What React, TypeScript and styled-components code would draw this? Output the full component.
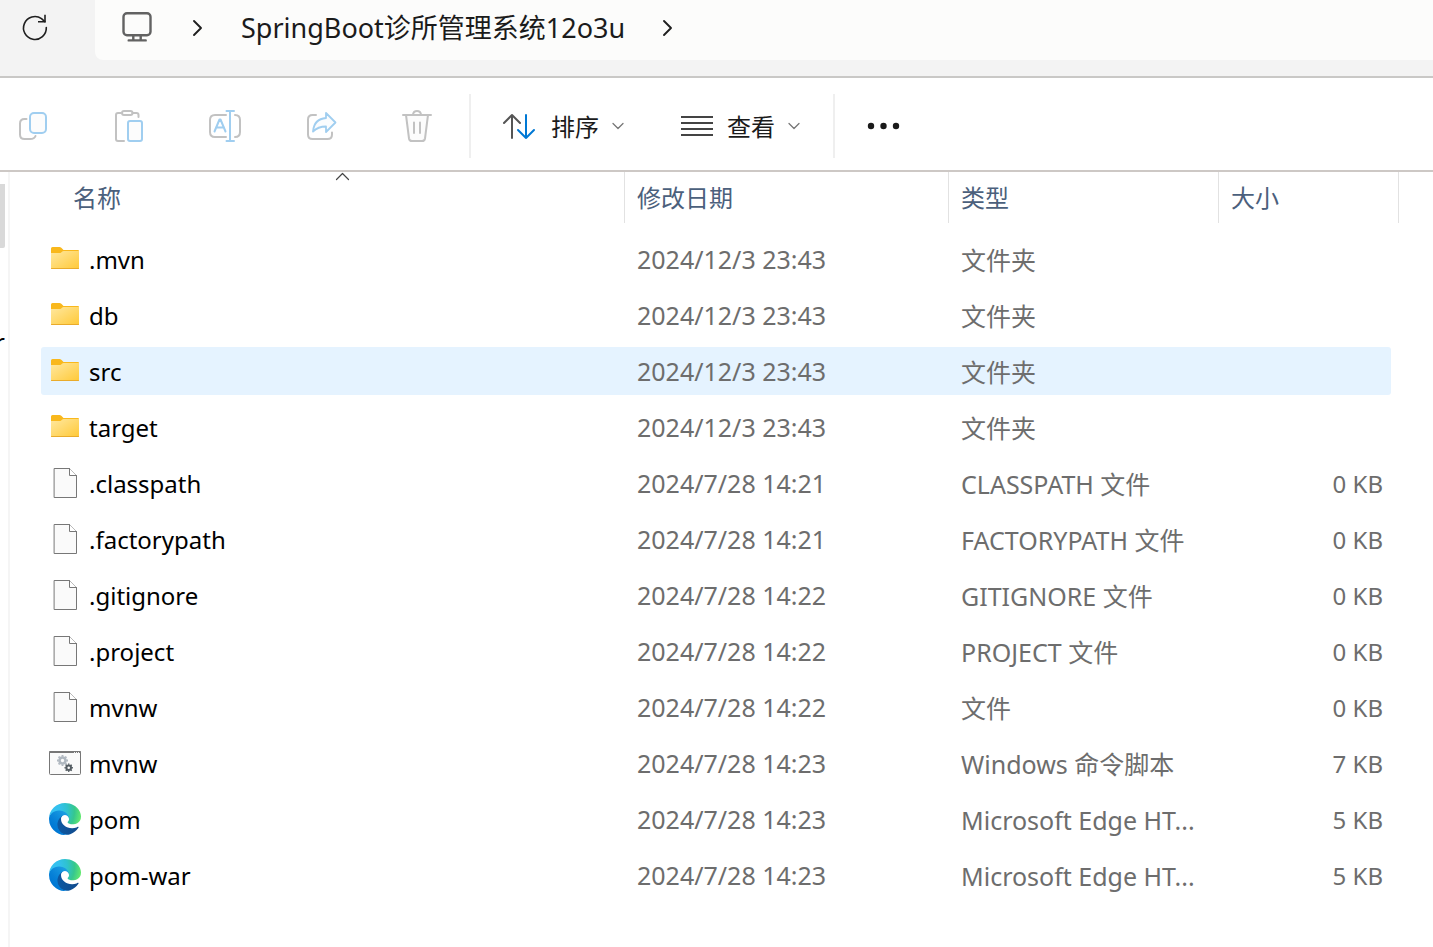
import React from 'react';
import styled, { createGlobalStyle } from 'styled-components';

const GlobalStyle = createGlobalStyle`
  * { box-sizing: border-box; }
  body { margin: 0; background: #fff; }
  body, button { font-family: 'Noto Sans', 'Noto Sans CJK SC', sans-serif; }
  button { border: 0; padding: 0; background: none; }
  svg { display: block; fill: none; stroke-linecap: round; stroke-linejoin: round; }
`;

const Window = styled.div`
  display: flex;
  flex-direction: column;
  min-height: 100vh;
  overflow: hidden;
`;

const AddressBar = styled.header`
  display: flex;
  height: 78px;
  padding-bottom: 16px;
  background: #f3f3f3;
  border-bottom: 2px solid #c9c8c6;
`;

const RefreshButton = styled.button`
  width: 95px;
  padding-left: 20px;
  padding-bottom: 4px;
`;

const Breadcrumb = styled.nav`
  flex: 1;
  display: flex;
  align-items: center;
  gap: 37px;
  padding: 0 0 4px 24px;
  background: #fcfcfb;
  background-clip: padding-box;
  border-bottom-left-radius: 8px;
`;

const Crumb = styled.a`
  color: #1b1b1b;
  font-size: 27px;
  line-height: 40px;
  text-decoration: none;
  white-space: nowrap;
`;

const Toolbar = styled.div`
  display: flex;
  align-items: center;
  height: 94px;
  padding: 4px 0 0 16px;
  border-bottom: 2px solid #cdc8c5;
`;

const IconGroup = styled.div`
  display: flex;
  gap: 60px;
`;

const MenuGroup = styled.div`
  display: flex;
  gap: 54px;
`;

const IconButton = styled.button`
  width: 36px;
  height: 36px;
`;

const Divider = styled.span`
  width: 2px;
  height: 64px;
  margin: 0 31px 0 33px;
  background: #efefef;
`;

const MenuButton = styled.button`
  display: flex;
  align-items: center;
  gap: 13px;
  color: #1b1b1b;
  font-size: 24px;
  line-height: 36px;
  white-space: nowrap;
`;

const Label = styled.span`
  padding-top: 2px;
`;

const Body = styled.div`
  flex: 1;
  display: flex;
`;

const NavPane = styled.aside`
  width: 10px;
  flex: none;
  padding-top: 12px;
  border-right: 2px solid #f5f5f5;
`;

const ScrollThumb = styled.div`
  width: 5px;
  height: 64px;
  background: #d9d9d9;
  border-bottom-right-radius: 2px;
`;

const NavLabel = styled.div`
  display: flex;
  justify-content: flex-end;
  width: 5px;
  height: 36px;
  margin-top: 76px;
  font-size: 24px;
  line-height: 36px;
`;

const Main = styled.main`
  flex: 1;
  min-width: 0;
  padding: 0 34px 0 31px;
`;

const FileTable = styled.table`
  width: 100%;
  table-layout: fixed;
  border-collapse: collapse;
  font-size: 24px;
  line-height: 36px;
  white-space: nowrap;
`;

const Th = styled.th<{ $width?: number }>`
  ${p => p.$width !== undefined && `width: ${p.$width}px;`}
  padding: 0 0 8px;
  font-weight: 400;
  text-align: left;
`;

const HeaderButton = styled.button<{ $first?: boolean; $open?: boolean }>`
  position: relative;
  display: block;
  width: 100%;
  height: 51px;
  padding-top: 1px;
  padding-left: ${p => (p.$first ? 32 : 12)}px;
  border-right: ${p => (p.$open ? 0 : 1)}px solid #e2e2e2;
  color: #4b607c;
  font-size: 24px;
  line-height: 36px;
  text-align: left;
`;

const HeaderEnd = styled.div`
  height: 51px;
  border-right: 1px solid #e2e2e2;
`;

const SortMark = styled.svg`
  position: absolute;
  top: 0;
  left: 50%;
`;

const Row = styled.tr<{ $active?: boolean }>`
  --row: ${p => (p.$active ? '#e5f3ff' : 'transparent')};
`;

const Td = styled.td`
  padding: 4px 0;
  color: #6d6d6d;
`;

const Cell = styled.div<{ $kind?: 'name' | 'size' }>`
  display: flex;
  align-items: center;
  height: 48px;
  gap: 8px;
  padding: ${p => (p.$kind === 'name' ? '0 8px' : p.$kind === 'size' ? '0 8px 0 12px' : '0 12px')};
  justify-content: ${p => (p.$kind === 'size' ? 'flex-end' : 'flex-start')};
  border-radius: ${p => (p.$kind === 'name' ? '3px 0 0 3px' : p.$kind === 'size' ? '0 3px 3px 0' : '0')};
  background: var(--row);
  color: ${p => (p.$kind === 'name' ? '#000' : 'inherit')};
  font-size: ${p => (p.$kind ? 24 : 25)}px;
`;

const Chevron = () => (
  <svg width="12" height="20" viewBox="0 0 12 20" stroke="#1f1f1f" strokeWidth="1.900">
    <path d="M2 3l7 7-7 7" />
  </svg>
);

const Caret = () => (
  <svg width="12" height="8" viewBox="0 0 12 8" stroke="#777" strokeWidth="1.300">
    <path d="M1 1.500l5 5 5-5" />
  </svg>
);

const FolderIcon = () => (
  <svg width="32" height="32" viewBox="0 0 32 32">
    <defs>
      <linearGradient id="folder" x1="0" y1="0" x2="1" y2="1">
        <stop offset="0" stopColor="#ffe8a0" />
        <stop offset="1" stopColor="#ffc937" />
      </linearGradient>
    </defs>
    <path d="M2 5.500q0-1.500 1.500-1.500h7q1 0 1.800.8l2.200 2.200h14.500q1 0 1 1v4H2z" fill="#f9b81c" />
    <path d="M2 10h8.500q1 0 1.700-.6l1-.9q.6-.5 1.500-.5H30v17q0 1-1 1H3q-1 0-1-1z" fill="url(#folder)" />
    <path d="M2.500 25.500h27" stroke="#e9ab2b" />
  </svg>
);

const FileIcon = () => (
  <svg width="32" height="32" viewBox="0 0 32 32">
    <path d="M5.500 1.500h15l7 7v22h-22z" fill="#fafafa" stroke="#777" />
    <path d="M20.500 1.500v7h7" fill="#fff" stroke="#777" />
  </svg>
);

const Gear = ({ x, y, r, color }: { x: number; y: number; r: number; color: string }) => (
  <g transform={`translate(${x} ${y})`} stroke={color}>
    <circle r={r * 0.55} strokeWidth={r * 0.48} />
    {[0, 45, 90, 135, 180, 225, 270, 315].map(a => (
      <path key={a} d={`M0 ${-r * 0.7}V${-r}`} strokeWidth={r * 0.34} strokeLinecap="butt" transform={`rotate(${a})`} />
    ))}
  </g>
);

const ScriptIcon = () => (
  <svg width="32" height="32" viewBox="0 0 32 32">
    <rect x=".5" y="4.500" width="31" height="23" rx="1" fill="#fafafa" stroke="#777" />
    <path d="M1 5h30" stroke="#777" strokeWidth="2" />
    <path d="M25.500 5.500h.1M27.500 5.500h.1M29.500 5.500h.1" stroke="#fff" />
    <Gear x={13.500} y={13.500} r={5.500} color="#b0b8c0" />
    <Gear x={19.700} y={20.700} r={4.200} color="#545c62" />
  </svg>
);

const EdgeIcon = () => (
  <svg width="32" height="32" viewBox="0 0 256 256">
    <defs>
      <linearGradient id="edgeDeep" x1="63" y1="178" x2="241" y2="178" gradientUnits="userSpaceOnUse">
        <stop offset="0" stopColor="#0c59a4" />
        <stop offset="1" stopColor="#114a8b" />
      </linearGradient>
      <linearGradient id="edgeBlue" x1="150" y1="98" x2="45" y2="212" gradientUnits="userSpaceOnUse">
        <stop offset="0" stopColor="#1b9de2" />
        <stop offset=".16" stopColor="#1595df" />
        <stop offset=".67" stopColor="#0680d7" />
        <stop offset="1" stopColor="#0078d4" />
      </linearGradient>
      <radialGradient id="edgeGreen" cx="26" cy="47" r="202" gradientTransform="scale(1.150 1.300)" gradientUnits="userSpaceOnUse">
        <stop offset="0" stopColor="#35c1f1" />
        <stop offset=".25" stopColor="#34c1ed" />
        <stop offset=".5" stopColor="#2fc2cf" />
        <stop offset=".75" stopColor="#36c78e" />
        <stop offset="1" stopColor="#66eb6e" />
      </radialGradient>
    </defs>
    <path fill="url(#edgeDeep)" d="M231 190.500c-3.400 1.800-6.900 3.400-10.500 4.700a101.500 101.500 0 0 1-35.900 6.500c-47.300 0-88.500-32.500-88.500-74.300.1-11.400 6.400-21.900 16.400-27.300-42.800 1.800-53.800 46.400-53.800 72.500 0 74 68.100 81.400 82.800 81.400 7.900 0 19.800-2.300 27-4.600l1.300-.4a128.300 128.300 0 0 0 66.600-52.800 4 4 0 0 0-5.400-5.700z" />
    <path fill="url(#edgeBlue)" d="M105.700 241.400a79.200 79.200 0 0 1-22.700-21.300 80.700 80.700 0 0 1 29.500-120c3.200-1.500 8.500-4.100 15.600-4a32.400 32.400 0 0 1 25.700 13 31.900 31.900 0 0 1 6.300 18.700c0-.2 24.500-79.600-80-79.600-43.900 0-80 41.700-80 78.200a130.200 130.200 0 0 0 12.100 56 128 128 0 0 0 156.400 67 75.500 75.500 0 0 1-62.800-8z" />
    <path fill="url(#edgeGreen)" d="M152.300 148.900c-.8 1-3.300 2.500-3.300 5.700 0 2.600 1.700 5.100 4.700 7.200 14.400 10 41.500 8.700 41.600 8.700a59.600 59.600 0 0 0 30.300-8.300 61.400 61.400 0 0 0 30.400-52.900c.3-22.400-8-37.300-11.300-43.900C223.500 23.900 177.700 0 128 0a128 128 0 0 0-128 126.200c.5-36.500 36.800-66 80-66 3.500 0 23.500.3 42 10.100 16.300 8.500 24.900 18.900 30.900 29.200 6.100 10.700 7.200 24.100 7.200 29.500s-2.700 13.300-7.800 19.900z" />
  </svg>
);

const icons = { folder: FolderIcon, file: FileIcon, script: ScriptIcon, edge: EdgeIcon };

type Entry = { icon: keyof typeof icons; name: string; date: string; type: string; size?: string; active?: boolean };

const entries: Entry[] = [
  { icon: 'folder', name: '.mvn', date: '2024/12/3 23:43', type: '文件夹' },
  { icon: 'folder', name: 'db', date: '2024/12/3 23:43', type: '文件夹' },
  { icon: 'folder', name: 'src', date: '2024/12/3 23:43', type: '文件夹', active: true },
  { icon: 'folder', name: 'target', date: '2024/12/3 23:43', type: '文件夹' },
  { icon: 'file', name: '.classpath', date: '2024/7/28 14:21', type: 'CLASSPATH 文件', size: '0 KB' },
  { icon: 'file', name: '.factorypath', date: '2024/7/28 14:21', type: 'FACTORYPATH 文件', size: '0 KB' },
  { icon: 'file', name: '.gitignore', date: '2024/7/28 14:22', type: 'GITIGNORE 文件', size: '0 KB' },
  { icon: 'file', name: '.project', date: '2024/7/28 14:22', type: 'PROJECT 文件', size: '0 KB' },
  { icon: 'file', name: 'mvnw', date: '2024/7/28 14:22', type: '文件', size: '0 KB' },
  { icon: 'script', name: 'mvnw', date: '2024/7/28 14:23', type: 'Windows 命令脚本', size: '7 KB' },
  { icon: 'edge', name: 'pom', date: '2024/7/28 14:23', type: 'Microsoft Edge HT...', size: '5 KB' },
  { icon: 'edge', name: 'pom-war', date: '2024/7/28 14:23', type: 'Microsoft Edge HT...', size: '5 KB' },
];

const GREY = '#c2c2c2';
const BLUE = '#a0cef0';

export default function App() {
  return (
    <Window>
      <GlobalStyle />
      <AddressBar>
        <RefreshButton aria-label="刷新">
          <svg width="30" height="30" viewBox="0 0 30 30" stroke="#1f1f1f" strokeWidth="1.600">
            <path d="M26.300 14.500A11.400 11.400 0 1 1 21.500 5.700L24.800 8.600" />
            <path d="M25 2.500v6.200h-6.200" strokeLinecap="square" strokeLinejoin="miter" />
          </svg>
        </RefreshButton>
        <Breadcrumb aria-label="路径">
          <svg width="36" height="36" viewBox="0 0 36 36" stroke="#626262" strokeWidth="2.400">
            <rect x="4.500" y="3.200" width="27" height="22" rx="3.500" />
            <path d="M14.300 26v4M21.700 26v4M9.700 30.400h17" />
          </svg>
          <Chevron />
          <Crumb href="#">SpringBoot诊所管理系统12o3u</Crumb>
          <Chevron />
        </Breadcrumb>
      </AddressBar>

      <Toolbar role="toolbar">
        <IconGroup>
          <IconButton aria-label="复制">
            <svg width="36" height="36" viewBox="0 0 36 36" strokeWidth="2">
              <path d="M10.500 11H8.500Q4 11 4 15.500V26.500Q4 31 8.500 31H14Q18.500 31 19.500 28" stroke={GREY} />
              <rect x="14" y="5" width="16" height="20" rx="4" fill="#fcfcfc" stroke={BLUE} />
            </svg>
          </IconButton>
          <IconButton aria-label="粘贴">
            <svg width="36" height="36" viewBox="0 0 36 36" strokeWidth="2">
              <path d="M9 5H6Q4 5 4 7V31Q4 33 6 33H12M20.500 5H24.500Q26.500 5 26.500 7V9" stroke={GREY} />
              <rect x="10" y="3" width="10.500" height="4" rx="2" stroke={GREY} />
              <rect x="16" y="13" width="14" height="20" rx="2" fill="#fcfcfc" stroke={BLUE} />
            </svg>
          </IconButton>
          <IconButton aria-label="重命名">
            <svg width="36" height="36" viewBox="0 0 36 36" strokeWidth="2">
              <path d="M18 7H7Q2 7 2 12V24Q2 29 7 29H18M27 7Q32 7 32 12V24Q32 29 27 29" stroke={GREY} />
              <path d="M22 3V33M18.500 3H26M18.500 33H26" stroke={BLUE} />
              <path d="M6.500 23.500L11.500 11.500H12.500L17.500 23.500M8 19.500H16" stroke={BLUE} />
            </svg>
          </IconButton>
          <IconButton aria-label="共享">
            <svg width="36" height="36" viewBox="0 0 36 36" strokeWidth="2">
              <path d="M12 7H8.500Q4 7 4 11.500V26.500Q4 31 8.500 31H23.500Q28 31 28 26.500V24.500" stroke={GREY} />
              <path d="M22 5L31.500 14.500L22 24V18.500Q14 18.500 9 23.500Q10 11 22 10Z" fill="#fafcfe" stroke={BLUE} strokeWidth="1.800" />
            </svg>
          </IconButton>
          <IconButton aria-label="删除">
            <svg width="36" height="36" viewBox="0 0 36 36" strokeWidth="2">
              <path d="M6 7L9 30.500Q9.400 33 12 33H22Q24.600 33 25 30.500L28 7" fill="#fcfcfc" stroke={GREY} />
              <path d="M3 7H31M13 6.500Q13.500 3 17 3T21 6.500M14 14.500V25M20 14.500V25" stroke={GREY} />
            </svg>
          </IconButton>
        </IconGroup>
        <Divider />
        <MenuGroup>
          <MenuButton>
            <svg width="36" height="36" viewBox="0 0 36 36" strokeWidth="2">
              <path d="M10 30V7M2 15L10 7L18 15" stroke="#555" />
              <path d="M24 7V30M16 22L24 30L32 22" stroke="#0078d4" />
            </svg>
            <Label>排序</Label>
            <Caret />
          </MenuButton>
          <MenuButton>
            <svg width="36" height="36" viewBox="0 0 36 36" stroke="#444" strokeWidth="2" shapeRendering="crispEdges">
              <path d="M4 9H34M4 15H34M4 21H34M4 27H34" />
            </svg>
            <Label>查看</Label>
            <Caret />
          </MenuButton>
        </MenuGroup>
        <Divider />
        <IconButton aria-label="更多">
          <svg width="36" height="36" viewBox="0 0 36 36">
            <g fill="#1a1a1a">
              <circle cx="5" cy="18" r="3.200" />
              <circle cx="17.500" cy="18" r="3.200" />
              <circle cx="30" cy="18" r="3.200" />
            </g>
          </svg>
        </IconButton>
      </Toolbar>

      <Body>
        <NavPane>
          <ScrollThumb />
          <NavLabel>r</NavLabel>
        </NavPane>
        <Main>
          <FileTable>
            <thead>
              <tr>
                <Th>
                  <HeaderButton $first>
                    名称
                    <SortMark width="18" height="10" viewBox="0 0 18 10" stroke="#444" strokeWidth="1.200">
                      <path d="M3.500 7.500l6-6 6 6" />
                    </SortMark>
                  </HeaderButton>
                </Th>
                <Th $width={324}><HeaderButton>修改日期</HeaderButton></Th>
                <Th $width={270}><HeaderButton>类型</HeaderButton></Th>
                <Th $width={172}><HeaderButton $open>大小</HeaderButton></Th>
                <Th $width={8} aria-hidden="true"><HeaderEnd /></Th>
              </tr>
            </thead>
            <tbody>
              {entries.map(e => {
                const Icon = icons[e.icon];
                return (
                  <Row key={e.icon + e.name} $active={e.active}>
                    <Td><Cell $kind="name"><Icon /><Label>{e.name}</Label></Cell></Td>
                    <Td><Cell>{e.date}</Cell></Td>
                    <Td><Cell><Label>{e.type}</Label></Cell></Td>
                    <Td><Cell $kind="size"><Label>{e.size}</Label></Cell></Td>
                  </Row>
                );
              })}
            </tbody>
          </FileTable>
        </Main>
      </Body>
    </Window>
  );
}
